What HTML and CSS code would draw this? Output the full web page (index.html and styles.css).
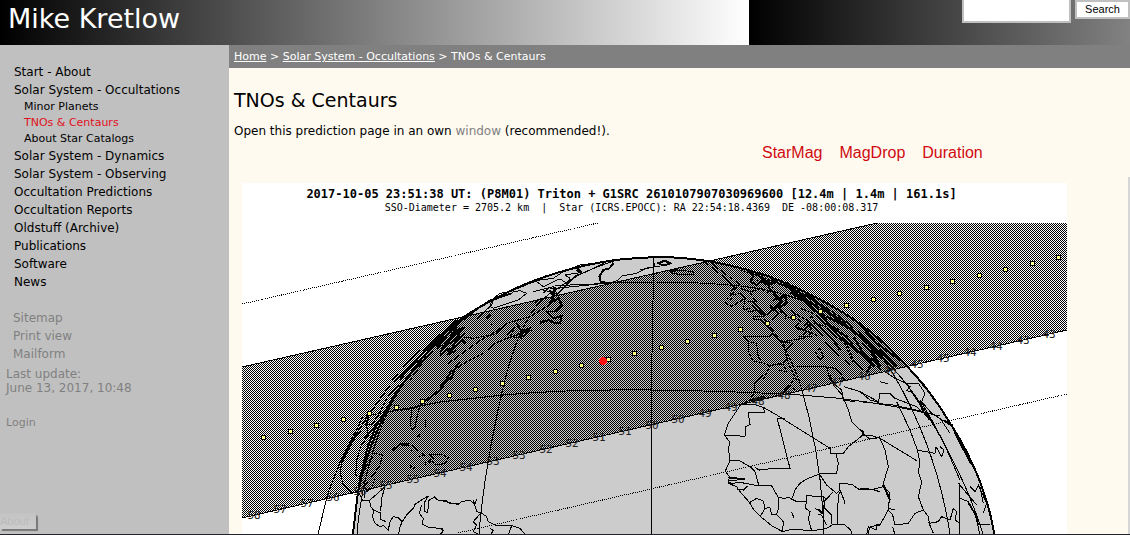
FILE: index.html
```html
<!DOCTYPE html>
<html lang="en">
<head>
<meta charset="utf-8">
<title>Mike Kretlow - TNOs &amp; Centaurs</title>
<link rel="stylesheet" href="styles.css">
</head>
<body>
<header class="banner">
  <div class="brand">Mike Kretlow</div>
  <form class="search">
    <input class="search-field" type="text" aria-label="Search terms">
    <button class="search-button" type="submit">Search</button>
  </form>
</header>
<div class="page">
  <aside class="sidebar">
    <nav>
      <ul class="menu">
        <li><a href="#">Start - About</a></li>
        <li><a href="#">Solar System - Occultations</a>
          <ul class="submenu">
            <li><a href="#">Minor Planets</a></li>
            <li><a class="current" href="#">TNOs &amp; Centaurs</a></li>
            <li><a href="#">About Star Catalogs</a></li>
          </ul>
        </li>
        <li><a href="#">Solar System - Dynamics</a></li>
        <li><a href="#">Solar System - Observing</a></li>
        <li><a href="#">Occultation Predictions</a></li>
        <li><a href="#">Occultation Reports</a></li>
        <li><a href="#">Oldstuff (Archive)</a></li>
        <li><a href="#">Publications</a></li>
        <li><a href="#">Software</a></li>
        <li><a href="#">News</a></li>
      </ul>
      <ul class="tools">
        <li><a href="#">Sitemap</a></li>
        <li><a href="#">Print view</a></li>
        <li><a href="#">Mailform</a></li>
      </ul>
    </nav>
    <div class="updated">Last update:<br>June 13, 2017, 10:48</div>
    <a class="login" href="#">Login</a>
    <div class="tip">About</div>
  </aside>
  <main class="content">
    <nav class="crumbs"><a href="#">Home</a> &gt; <a href="#">Solar System - Occultations</a> &gt; TNOs &amp; Centaurs</nav>
    <h1 class="title">TNOs &amp; Centaurs</h1>
    <p class="intro">Open this prediction page in an own <a href="#">window</a> (recommended!).</p>
    <div class="notes"><span>StarMag</span><span>MagDrop</span><span>Duration</span></div>
    <div class="frame">
    <figure class="map">
      <figcaption>
        <div class="event">2017-10-05 23:51:38 UT: (P8M01) Triton + G1SRC 2610107907030969600 [12.4m | 1.4m | 161.1s]</div>
        <div class="details">SSO-Diameter = 2705.2 km  |  Star (ICRS.EPOCC): RA 22:54:18.4369  DE -08:00:08.317</div>
      </figcaption>
      <svg class="chart" viewBox="242 223 825 311" role="img" aria-label="Occultation path over the Atlantic">
        <defs>
          <pattern id="dither" width="2" height="2" patternUnits="userSpaceOnUse">
            <rect width="1" height="1"/><rect x="1" y="1" width="1" height="1"/>
          </pattern>
          <marker id="dot" markerWidth="6" markerHeight="6" refX="3" refY="3" markerUnits="userSpaceOnUse">
            <rect x="0.5" y="0.5" width="5" height="5" fill="#000"/><rect x="1.5" y="1.5" width="3" height="3" fill="#ffff80"/>
          </marker>
        </defs>
        <path id="globe" fill="#ccc" d="M352 540L353 533 358 492Q366 453 383 418 393 396 407 378 430 345 462 318 482 305 506 293 532 280 560 272 587 264 615 260 640 257 665 257 690 258 713 262 745 268 773 278 794 286 813 296 835 307 853 319 881 338 905 364 931 391 950 423 963 443 972 463 981 482 987 503 992 518 995 540Z"/>
        <path fill="url(#dither)" d="M242 367L877 223H1067V330L242 518Z"/>
        <path class="line" d="M242 367L877 223M242 518L1067 330"/>
        <path class="fine" d="M242 304L598 223M458 533L1067 394"/>
        <path class="limb" d="M352 540L353 533 358 492Q366 453 383 418 393 396 407 378 430 345 462 318 482 305 506 293 532 280 560 272 587 264 615 260 640 257 665 257 690 258 713 262 745 268 773 278 794 286 813 296 835 307 853 319 881 338 905 364 931 391 950 423 963 443 972 463 981 482 987 503 992 518 995 540"/>
        <!-- meridians and parallels -->
        <path class="line" d="M653 257V300L651.500 380V534M318 534L328 493 341 460 352 440 370 413 390 385 411 366M357 534Q361 480 382 425T446 342M479 534Q484 470 503 388T556 290Q580 270 625 258M824 534Q822 460 802 390T705 262M950 534Q937 450 895 377T740 270M983 534Q963 470 920 403T770 278"/>
        <path class="line" d="M366 416L410 408 440 402 503 395Q570 389 651 390T800 395T940 416M550 289L608 283Q680 280 740 286T850 325"/>
        <!-- west Atlantic: Canada and the east coast -->
        <g transform="translate(240 220) scale(.33333)">
          <path class="thick" d="M655 303L625 325 595 350 560 385 530 420 500 450 480 480M650 320L620 345 590 380M660 330L635 350 615 370M655 355L622 405 650 390M660 425L642 450 634 480"/>
          <path class="line" d="M540 390L490 440M475 462L455 480M660 340L600 410M640 325L590 370M650 375L600 402M580 375L560 400 540 440 510 480"/>
        </g>
        <g transform="translate(240 375) scale(.33333)">
          <path class="thick" d="M510 0L470 50 435 110 410 150 385 210 370 270 357 330M388 115L378 150M345 185L318 235 305 262M425 130L400 160 375 190M540 90L560 75 600 45 620 15 640 0M480 105L515 100 540 92M458 225L480 208 508 212"/>
          <path class="line" d="M475 30L440 70 415 120 395 150 378 150 345 185M370 120L352 160 330 200 310 240 300 290 310 330 335 355 358 350M376 130L385 180 362 215 350 255 347 300 363 308 380 270 405 235M405 235L428 240 420 270 400 300 370 335 375 370M515 105L511 150 516 166 526 155 530 130 538 100M555 135L558 152 548 160M538 178L534 185 544 184M480 208L505 204 520 215 545 235 555 240 536 245 515 225M510 270L525 280 508 278M555 265L580 250 570 240 610 240 625 248 614 266 585 270 575 258 555 270M355 352L370 378 390 375 413 355 430 340 435 335M370 320L380 350 395 340 405 310M388 375L392 395 402 407 397 425 405 445 420 455 431 452 445 465 450 440 460 425 475 428 487 440 480 455 475 480M435 335L425 370 422 408M400 405L420 413M420 410L422 433 438 440M487 440L500 420 520 400 525 388 540 378 565 363 555 380 553 410 562 412 566 395 564 378 584 366 592 375 620 376 630 387 660 387M545 390L538 415 550 430 547 448 565 456 608 462 605 480"/>
        </g>
        <g transform="translate(440 240) scale(.33333)">
          <path class="thick" d="M0 310L45 260 90 220 150 182 215 160M0 335L35 295 75 260M5 320L50 300 75 280M25 340L65 300 75 310M30 300L35 280 60 265M45 240L30 265M330 150L340 170 330 190 355 175 365 195 345 215M340 235L365 228 360 250 345 250 325 240 300 248M230 250L245 275 270 265 250 290 235 280M410 80L425 98 410 90M520 70L508 85 490 90 478 110 482 125 510 130M345 140L340 170M150 225L140 235M35 390L15 425 0 440"/>
          <path class="line" d="M345 215L320 215 340 235M200 285L225 260 210 290 250 295M90 225L130 195 155 180 180 160 210 155 270 130 300 120 340 115 370 95 420 75 500 65M155 182L150 200 160 205 205 190 235 180 260 160 240 152 215 157M290 125L310 140 350 120 365 120 380 130 390 115 375 105 420 98M280 155L340 140 350 160 310 150M310 160L325 145M25 370L60 345 115 305 140 290 170 280 200 250 270 230 320 200 345 175M35 395L80 365 130 340 165 310 200 295 275 270M60 290L100 295 150 285 190 260M100 245L155 195 160 175M150 255L158 255M280 190L305 175M510 130L535 120 545 108 590 100 620 84 660 78M510 130L390 135 345 138M500 65L440 95 410 105 350 165M520 70L515 62"/>
          <path class="line" d="M0 345L35 355 55 358 65 350 90 345 105 358 110 342M100 345L110 380 123 383 140 395 145 410 165 420 215 422 240 430 257 450M123 383L100 410 110 420 100 440 120 450M215 422L205 450M150 430L160 435 152 450M0 430L10 435 0 448" transform="translate(0 435)"/>
        </g>
        <!-- Europe and the Mediterranean -->
        <g transform="translate(640 220) scale(.33333)">
          <path class="thick" d="M52 130L75 122 90 130 75 136 57 132M90 155L110 150M320 150L340 165 332 185 350 195 365 180 385 195 410 185M410 175L390 190 360 170 345 155M385 200L405 225 425 245 400 270 390 255M400 240L420 235 435 225 440 250 420 260 425 280M380 285L400 265 415 280 395 300M440 185L460 210 455 220 480 235 500 220 530 245M430 190L480 230 530 260 560 300M445 200L520 240 590 295 650 340 720 400M480 230L510 260 550 290M500 250L540 285 600 350 650 390 720 435M560 290L620 320 680 365M580 325L620 350 655 400M640 350L670 400 695 430 680 460M690 390L720 450M520 300L580 360 600 390M465 320L490 330 515 310"/>
          <path class="line" d="M110 150L160 155 162 165 125 165 90 158M525 280L610 360 640 430M450 270L480 290M0 150L45 140 45 130M275 205L290 200 275 225 300 220 315 235 290 250 275 260 250 245 260 235 275 240 270 220 280 205M300 205L330 215 350 210 365 205 380 218 400 205M290 200L330 240 380 285M315 235L310 270 330 265 325 275 360 270 375 290 340 290 340 300 365 300 375 315M330 220L350 245 320 245M415 260L440 285 435 295 460 290 485 305 465 320 475 330 500 310 515 325 480 350 520 350M310 348L390 350 400 335 375 315M310 348L325 365 325 395 340 425 365 427 353 405 350 370 325 365M365 427L390 437 430 428 440 420 430 365 410 355 395 335M430 365L460 360 490 355 520 335M430 370L445 430 470 480M430 365L460 370 440 390M390 437L370 480M395 435L430 435 440 455 415 450M470 440L550 440 585 445 600 460 615 480M530 390L540 385 550 410 540 420 525 395M560 440L570 480M520 310L560 320 580 345 620 370 640 420 670 450M480 325L530 345 590 400 630 435M560 310L600 330M500 310L515 290 530 315M215 130L260 165M270 170L300 195M460 280L500 300 550 350M480 265L520 280 560 315M350 180L400 205"/>
        </g>
        <!-- northern and western Africa -->
        <g transform="translate(640 375) scale(.33333)">
          <path class="line" d="M370 0L345 25 345 50 330 75 300 92 285 115 265 145 253 180 268 200 266 225 270 257 256 288 268 305 265 325 290 335 300 350 328 382 342 405 362 425 395 452 428 470 460 462 515 468 560 460 580 448 615 450 632 465 636 480M250 180L315 184 317 155 330 148 324 112 374 114 370 97 340 88 305 88M370 97L410 120 570 220 573 235 610 235 625 215 672 178 655 160 635 140 625 105 607 60 580 30 565 0M412 132L435 132M412 132L450 280 350 283M268 258L298 257 330 275 345 290 357 333 395 333 415 368 435 370 445 367 470 380 500 380 500 362 550 365 560 372M345 278L360 286M265 308L315 312 265 318M268 326L300 322 357 333M290 342L310 345 322 333M330 382L350 370 370 378 375 400 362 422M375 400L390 398 395 418 410 418 416 400 415 368M410 418L430 440 428 470M457 370L465 345 480 325 500 312 538 297 590 295 595 265 588 235M500 362L497 400 510 410 505 430 515 468M538 297L560 330 590 355 600 345 600 325 635 328 660 345 690 342 720 350M550 365L555 400 575 420 576 448M560 372L580 350M598 350L592 400 592 448M670 178L690 192 720 188M610 365L615 387M600 345L610 370M570 0L580 25 605 45 610 75 645 80M612 35L660 50 715 80M455 410L462 430M525 400L550 415 535 420M550 390V440M683 480L690 455 720 450M465 0L450 35 420 60 380 70 330 78M430 50L445 30 465 45M545 420L560 450"/>
          <path class="thick" d="M268 310L290 308M265 322L278 330M335 75L375 65M535 402L548 415M555 378L560 370"/>
        </g>
        <!-- eastern Africa and the Levant -->
        <g transform="translate(860 220) scale(.33333)">
          <path class="line" d="M0 515L30 540 55 547 60 520 90 520 105 535 170 560 190 580M0 545L100 555 190 575 220 605M75 455L105 475 140 490 175 490 195 520 185 545 215 580 270 615M135 490L150 500 140 512 150 515M60 485L85 492M110 545L150 630 172 690 180 730 175 755 185 785 175 830 190 870 205 890 208 910 235 905 245 890 270 900 280 865 290 875 285 900 300 910 300 790M0 628L10 635 5 648 30 645 60 655 75 690 85 740 70 790 72 800 90 820 85 865 105 870M60 655L170 722M0 805L40 808 70 800M90 820L85 870 60 915 50 915 50 930 25 920 20 945M190 870L165 880 145 910 105 915 98 885 85 870M170 690L225 700 228 680 245 710 252 690 240 680M205 905L220 940M190 490L270 610 330 730M180 540L215 600 250 665 300 780M150 510L185 560M295 790L350 855M300 835L325 845 345 880 360 945M330 800L345 815 355 795 380 850 370 880M350 880L355 915 390 915M300 910L300 945M265 910L270 945M98 920L105 945M240 595L270 640M360 800L370 850M325 850L355 900"/>
          <path class="thick" d="M0 315L50 370 120 420M0 340L30 375 70 410M5 370L40 400 60 440M0 400L45 440M25 375L90 435M60 390L110 440M178 545L190 575 210 600M250 600L275 615 300 670 340 740M70 795L90 840"/>
        </g>
        <path class="track" d="M263.500 437.500l26.500-6 26.500-6 26.500-6 26.500-6 26.500-6 26.500-6 26.500-6 26.500-6 26.500-6 26.500-6 26.500-6 26.500-6 26.500-6 26.500-6 26.500-6 26.500-6 26.500-6 26.500-6 26.500-6 26.500-6 26.500-6 26.500-6 26.500-6 26.500-6 26.500-6 26.500-6 26.500-6 26.500-6 26.500-6 26.500-6"/>
        <circle cx="603" cy="361" r="4" fill="#f11"/>
        <g class="elevations">
          <text x="254" y="519">58</text><text x="280" y="513">57</text><text x="307" y="507">57</text><text x="333" y="501">56</text><text x="360" y="495">56</text><text x="386" y="489">55</text><text x="413" y="483">55</text><text x="440" y="477">54</text><text x="466" y="471">54</text><text x="493" y="465">53</text><text x="519" y="459">53</text><text x="546" y="453">52</text><text x="572" y="447">52</text><text x="599" y="441">51</text><text x="625" y="435">51</text><text x="652" y="429">50</text><text x="678" y="423">50</text><text x="705" y="417">49</text><text x="731" y="411">49</text><text x="758" y="405">48</text><text x="784" y="399">48</text><text x="811" y="392">47</text><text x="837" y="386">47</text><text x="864" y="380">46</text><text x="890" y="374">46</text><text x="917" y="368">45</text><text x="943" y="362">45</text><text x="970" y="356">44</text><text x="996" y="350">44</text><text x="1023" y="344">43</text><text x="1049" y="338">43</text>
        </g>
      </svg>
    </figure>
    </div>
  </main>
</div>
</body>
</html>
```
FILE: styles.css
```css
* { box-sizing: border-box; }
body {
  margin: 0;
  min-height: 100vh;
  display: flex;
  flex-direction: column;
  background: #fffaf0;
  border-bottom: 1px solid #23232b;
  color: #000;
  font: 12px/18px "DejaVu Sans", sans-serif;
}
a { color: inherit; text-decoration: none; }
ul { list-style: none; margin: 0; padding: 0; }
.banner {
  height: 45px;
  display: flex;
  justify-content: space-between;
  align-items: flex-start;
  background: linear-gradient(90deg, #000, #fff) 0 0 / 749px 100% repeat-x;
}
.brand { padding-left: 8px; color: #fff; font-size: 27px; line-height: 38px; }
.search { display: flex; gap: 4px; }
.search-field {
  width: 109px;
  height: 23px;
  border: 2px solid #c0c0c0;
  border-top: 0;
  background: #fff;
}
.search-button {
  width: 55px;
  height: 19px;
  padding: 0;
  border: 2px solid #c0c0c0;
  background: #fff;
  color: #000;
  font: 11px/15px "Liberation Sans", Arial, sans-serif;
}
.page { flex: 1; display: flex; }
.sidebar {
  position: relative;
  flex: 0 0 229px;
  padding-top: 18px;
  background: #c0c0c0;
}
.menu { padding-left: 14px; }
.submenu { padding-left: 10px; font-size: 11px; line-height: 16px; }
.current { color: #e01020; }
.tools { padding: 18px 0 0 13px; color: #808080; }
.updated { padding: 4px 0 0 6px; color: #808080; line-height: 14px; }
.login { display: block; padding: 19px 0 0 6px; color: #808080; font-size: 11px; }
.tip {
  position: absolute;
  left: 0;
  bottom: 5px;
  width: 36px;
  overflow: hidden;
  border-radius: 0 3px 0 0;
  background: linear-gradient(#c3c3c3, #cdcdcd);
  box-shadow: 2px 2px 1px #777;
  color: #bbb;
  font: 11px/16px "Liberation Sans", Arial, sans-serif;
}
.content { flex: 1; min-width: 0; }
.crumbs {
  padding: 3px 5px 2px;
  background: #808080;
  color: #fff;
  font-size: 11px;
}
.crumbs a { text-decoration: underline; }
.title { margin: 20px 5px 0; font-size: 19px; line-height: 24px; font-weight: 400; }
.intro { margin: 10px 5px 0; }
.intro a { color: #808080; }
.notes {
  display: flex;
  gap: 17px;
  padding: 3px 0 0 533px;
  color: #d00a10;
  font: 16px/20px "Liberation Sans", Arial, sans-serif;
}
.frame { margin-top: 14px; padding: 6px 0 0 13px; border-right: 2px solid #d6d6d6; }
.map { max-width: 825px; margin: 0; background: #fff; }
.map figcaption {
  height: 40px;
  padding-top: 4px;
  text-align: center;
  font-family: "DejaVu Sans Mono", monospace;
  line-height: 14px;
}
.event { padding-right: 46px; font-size: 12px; font-weight: 700; }
.details { padding-right: 46px; font-size: 10px; white-space: pre; }
.chart { display: block; width: 100%; shape-rendering: crispEdges; }
.line, .thick, .limb, .fine { fill: none; stroke: #000; vector-effect: non-scaling-stroke; }
.thick { stroke-width: 2px; }
.limb { stroke-width: 2px; }
.fine { stroke-dasharray: 1 1; }
.track { fill: none; marker: url(#dot); }
.elevations { font: 11px "DejaVu Sans Mono", monospace; text-anchor: middle; fill: #222; }
```
